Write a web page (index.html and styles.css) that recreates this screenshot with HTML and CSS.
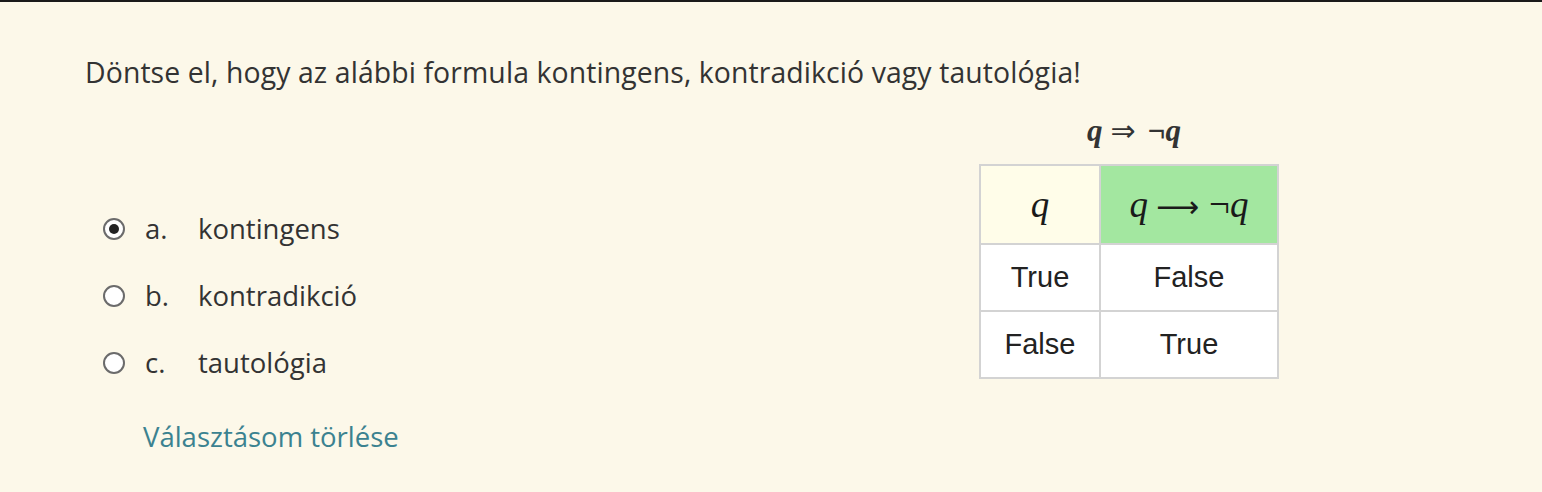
FILE: index.html
```html
<!DOCTYPE html>
<html lang="hu">
<head>
<meta charset="utf-8">
<link rel="stylesheet" href="styles.css">
</head>
<body>
<div class="topline"></div>
<div class="que">
  <p class="qtext">Döntse el, hogy az alábbi formula kontingens, kontradikció vagy tautológia!</p>
  <div class="body">
    <div class="answers">
      <div class="opt"><span class="radio checked"></span><span class="letter">a.</span><span class="label">kontingens</span></div>
      <div class="opt"><span class="radio"></span><span class="letter">b.</span><span class="label">kontradikció</span></div>
      <div class="opt"><span class="radio"></span><span class="letter">c.</span><span class="label">tautológia</span></div>
      <a class="clear">Választásom törlése</a>
    </div>
    <div class="formula">
      <div class="ftitle"><i>q</i><span class="dbl">⇒</span>¬<i>q</i></div>
      <table class="truth">
        <tr><th class="h1"><i>q</i></th><th class="h2"><i>q</i><span class="arr">⟶</span>¬<i>q</i></th></tr>
        <tr><td>True</td><td>False</td></tr>
        <tr><td>False</td><td>True</td></tr>
      </table>
    </div>
  </div>
</div>
</body>
</html>
```
FILE: styles.css
```css
html, body {
  margin: 0;
  padding: 0;
  background: #fcf8e9;
  height: 492px;
  overflow: hidden;
}
.topline {
  height: 2px;
  background: #1a1a1a;
}
.que {
  padding: 0 0 0 85px;
  font-family: "Open Sans", "Noto Sans", sans-serif;
  color: #333;
}
.qtext {
  margin: 0;
  padding-top: 53px;
  font-size: 28.4px;
  line-height: 34px;
  letter-spacing: 0.1px;
}
.body {
  display: flex;
}
.answers {
  padding-top: 106px;
  padding-left: 18px;
  width: 876px;
}
.opt {
  display: flex;
  align-items: center;
  height: 67px;
  font-size: 27.5px;
}
.radio {
  width: 22px;
  height: 22px;
  border: 2px solid #6b6b6b;
  border-radius: 50%;
  box-sizing: border-box;
  background: #fff;
  display: inline-flex;
  align-items: center;
  justify-content: center;
  margin-right: 20px;
}
.radio.checked::after {
  content: "";
  width: 10px;
  height: 10px;
  border-radius: 50%;
  background: #222;
}
.letter {
  width: 53px;
}
.label {
  color: #333;
}
.clear {
  display: block;
  margin-left: 40px;
  margin-top: 24px;
  font-size: 27.5px;
  line-height: 34px;
  color: #3b8290;
}
.formula {
  display: flex;
  flex-direction: column;
  align-items: center;
  width: 300px;
  padding-top: 27px;
}
.ftitle {
  font-family: "Liberation Serif", "DejaVu Serif", serif;
  font-weight: bold;
  font-size: 31px;
  line-height: 30px;
  color: #333;
  margin-bottom: 18px;
  padding-left: 10px;
}
.ftitle i { font-style: italic; }
.dbl {
  font-family: "DejaVu Sans", sans-serif;
  font-weight: normal;
  font-size: 30px;
  margin: 0 12px 0 8px;
}
.truth {
  border-collapse: collapse;
  border: 2px solid #cfcfcf;
  font-family: "Liberation Sans", Arial, sans-serif;
  font-size: 29px;
  color: #222;
}
.truth th, .truth td {
  border: 2px solid #d3d3d3;
  text-align: center;
  font-weight: normal;
}
.truth th {
  height: 75px;
  font-family: "Liberation Serif", "DejaVu Serif", serif;
  font-size: 37px;
  color: #1a1a1a;
}
.truth td {
  height: 63px;
  background: #fff;
}
.truth tr td:first-child, .truth .h1 { width: 116px; }
.truth tr td:last-child, .truth .h2 { width: 174px; }
.h1 { background: #fffde9; }
.h2 { background: #a3e7a0; }
.arr {
  font-family: "DejaVu Sans", sans-serif;
  font-size: 30px;
  margin: 0 10px 0 8px;
}
```
